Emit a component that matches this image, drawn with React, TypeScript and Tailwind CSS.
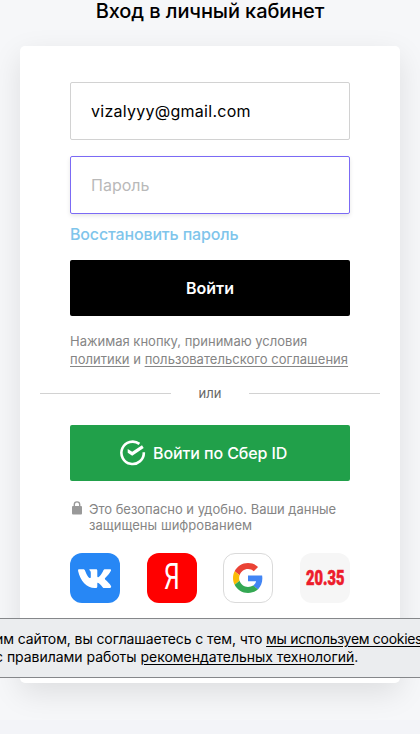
function Divider() {
  return (
    <div className="mt-[16px] flex h-[18px] items-center justify-between px-5 text-[13px] text-[#666]">
      <span className="h-px w-[131px] bg-[#d2d2d2]" />
      <span className="pt-px">или</span>
      <span className="h-px w-[131px] bg-[#d2d2d2]" />
    </div>
  );
}

function SberIcon() {
  return (
    <svg width="26" height="26" viewBox="0 0 26 26" fill="none">
      <path d="M19.4 3.9A11.2 11.2 0 1 0 23.8 12.2" stroke="#fff" strokeWidth="2.6" />
      <path d="M7.7 9 12.2 11.8 22 5.3 23.7 8 12.2 15.8 7.7 12.8Z" fill="#fff" />
    </svg>
  );
}

function LockIcon() {
  return (
    <svg className="shrink-0" width="11" height="14" viewBox="0 0 11 14" fill="none">
      <rect x="1" y="5" width="10" height="8.6" rx="1" fill="#999" />
      <path d="M3.3 5.5V3.6a2.7 2.7 0 0 1 5.4 0v1.9" stroke="#999" strokeWidth="1.4" />
    </svg>
  );
}

function VkIcon() {
  return (
    <svg width="34" height="20" viewBox="0 0 34 20" fill="#fff">
      <path d="M.9.2h4.4c1 0 1.4.5 1.8 1.5 1.6 4.4 3.6 7.3 4.9 7.3.6 0 .8-.5.8-1.6V4c0-1.5-.4-2-1.2-2.7C11 .7 11.4.2 12.2.2h5.9c.9 0 1.2.5 1.2 1.5v5.6c0 .7.3 1 .6 1 .5 0 1-.3 2-1.3 1.7-1.8 2.8-4.2 3.4-5.5.4-.9.9-1.3 1.9-1.3h4.5c1.4 0 1.6.7 1.2 1.6-.9 2.3-3.8 5.2-5.5 7-.7.8-.7 1.3 0 2 1.7 1.6 4.6 4 5.6 6.3.5 1.3-.1 2-1.4 2h-4.9c-1.1 0-1.6-.4-2.3-1.2-1.4-1.6-3.5-4.2-4.5-4.2-.5 0-.6.4-.6 1.2v2.3c0 1.2-.4 1.9-2.4 1.9C8.6 19.1 2.2 11.9.1 2 0 .8.2.2.9.2Z" />
    </svg>
  );
}

function GoogleIcon() {
  return (
    <svg width="30" height="30" viewBox="0 0 48 48">
      <path fill="#EA4335" d="M24 9.5c3.54 0 6.71 1.22 9.21 3.6l6.85-6.85C35.9 2.38 30.47 0 24 0 14.62 0 6.51 5.38 2.56 13.22l7.98 6.19C12.43 13.72 17.74 9.5 24 9.5z" />
      <path fill="#4285F4" d="M46.98 24.55c0-1.57-.15-3.09-.38-4.55H24v9.02h12.94c-.58 2.96-2.26 5.48-4.78 7.18l7.73 6c4.51-4.18 7.09-10.36 7.09-17.65z" />
      <path fill="#FBBC05" d="M10.53 28.59c-.48-1.45-.76-2.99-.76-4.59s.27-3.14.76-4.59l-7.98-6.19C.92 16.46 0 20.12 0 24c0 3.88.92 7.54 2.56 10.78l7.97-6.19z" />
      <path fill="#34A853" d="M24 48c6.48 0 11.93-2.13 15.89-5.81l-7.73-6c-2.15 1.45-4.92 2.3-8.16 2.3-6.26 0-11.57-4.22-13.47-9.91l-7.98 6.19C6.51 42.62 14.62 48 24 48z" />
    </svg>
  );
}

function SocialLogins() {
  return (
    <div className="mt-5 flex justify-between px-[50px]">
      <a className="flex size-[50px] items-center justify-center rounded-[12px] bg-[#2787f5] pt-[2px]">
        <VkIcon />
      </a>
      <a className="flex size-[50px] items-center justify-center rounded-[12px] bg-[#f00] text-white">
        <span className="scale-x-[0.68] pb-[3px] font-['Roboto',sans-serif] text-[37px] leading-none font-normal">Я</span>
      </a>
      <a className="flex size-[50px] items-center justify-center rounded-[12px] border border-[#dadada] bg-white">
        <GoogleIcon />
      </a>
      <a className="flex size-[50px] items-center justify-center rounded-[12px] bg-[#f6f6f6] text-[#ed1c2b]">
        <span className="scale-x-[0.73] font-['Roboto',sans-serif] text-[20px] leading-none font-black [-webkit-text-stroke:0.6px_#ed1c2b]">
          20.35
        </span>
      </a>
    </div>
  );
}

export default function App() {
  return (
    <div className="relative h-[734px] overflow-hidden bg-[#f6f7f9] font-['Inter',sans-serif] text-black">
      <h1 className="h-[46px] pt-px text-center text-[20px] leading-[20px] font-medium tracking-[-0.1px] whitespace-nowrap">
        Вход в личный кабинет
      </h1>
      <main className="relative z-10 mx-5 h-[637px] rounded-[5px] bg-white pt-9 shadow-[0_10px_30px_rgba(0,0,0,0.1)]">
        <div className="px-[50px]">
          <input
            className="block h-[58px] w-full rounded-[2px] border border-[#d2d2d2] px-5 text-[16px] tracking-[0.27px] outline-none"
            defaultValue="vizalyyy@gmail.com"
          />
          <input
            className="mt-4 block h-[58px] w-full rounded-[2px] border border-[#7b6af5] px-5 text-[16px] shadow-[0_2px_4px_rgba(0,0,0,0.1)] outline-none placeholder:text-[#b9b9b9]"
            placeholder="Пароль"
          />
          <a className="mt-[8px] block h-6 text-[16px] leading-6 font-medium tracking-[-0.15px] whitespace-nowrap text-[#7fc5eb]">
            Восстановить пароль
          </a>
          <button className="mt-[14px] block h-14 w-full rounded-[2px] bg-black text-[16px] font-semibold text-white">
            Войти
          </button>
          <p className="mt-[16px] text-[13px] leading-[18px] whitespace-nowrap text-[#858585]">
            Нажимая кнопку, принимаю условия
            <br />
            <span className="tracking-[0.03px]">
              <a className="underline underline-offset-2">политики</a> и{" "}
              <a className="underline underline-offset-2">пользовательского соглашения</a>
            </span>
          </p>
        </div>
        <Divider />
        <div className="mt-[23px] px-[50px]">
          <button className="flex h-14 w-full items-center gap-[7px] rounded-[2px] bg-[#21a04a] pl-[50px] text-[16px] font-medium tracking-[-0.1px] whitespace-nowrap text-white">
            <SberIcon />
            Войти по Сбер ID
          </button>
          <div className="mt-5 flex gap-[7px] pl-px text-[13px] leading-4 whitespace-nowrap text-[#858585]">
            <LockIcon />
            <p>
              <span className="tracking-[-0.03px]">Это безопасно и удобно. Ваши данные</span>
              <br />
              <span className="tracking-[0.04px]">защищены шифрованием</span>
            </p>
          </div>
        </div>
        <SocialLogins />
      </main>
      <footer className="mt-[37px] h-[14px] bg-[#f3f4f8]" />
      <aside className="absolute top-[618px] right-0 left-0 z-20 h-[60px] overflow-hidden border-y border-[#85878a] bg-[#ebedef] pt-[11px] text-[14px] leading-[18px] whitespace-nowrap">
        <p className="-ml-[5px] tracking-[-0.1px]">
          им сайтом, вы соглашаетесь с тем, что{" "}
          <a className="tracking-[-0.3px] underline underline-offset-2">мы используем cookies</a>
        </p>
        <p className="-ml-[5px] tracking-[-0.03px]">
          с правилами работы <a className="underline underline-offset-2">рекомендательных технологий</a>.
        </p>
      </aside>
    </div>
  );
}
